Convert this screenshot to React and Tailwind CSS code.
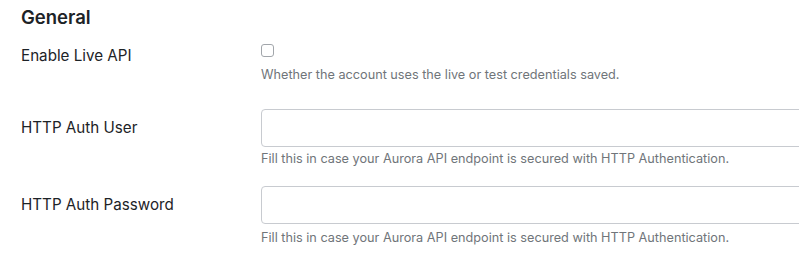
import React from 'react'

const font = { fontFamily: 'Inter, "Liberation Sans", sans-serif' }

function Row({ label, children, labelClass }) {
  return (
    <div className="grid grid-cols-[240px_1fr]">
      <div className={'text-[15.2px] leading-6 text-[#1d2327] ' + labelClass}>{label}</div>
      <div>{children}</div>
    </div>
  )
}

function Help({ children, className }) {
  return <p className={'text-[12.7px] leading-[18px] text-[#70757a] ' + className}>{children}</p>
}

export default function App() {
  return (
    <div className="min-h-screen bg-white pl-[21px] pt-[5px] overflow-hidden" style={font}>
      <h2 className="text-[18.5px] leading-6 font-semibold text-[#1d2327]">General</h2>

      <Row label="Enable Live API" labelClass="mt-[15px]">
        <div className="mt-[15px] w-[13px] h-[13px] rounded-[3px] border border-[#a2a6ab] bg-white" />
        <Help className="mt-[9px]">Whether the account uses the live or test credentials saved.</Help>
      </Row>

      <Row label="HTTP Auth User" labelClass="mt-[32px]">
        <div className="mt-[25px] w-[560px] h-[38px] rounded-[4px] border border-[#c8cbd0] bg-white" />
        <Help className="mt-[3px]">Fill this in case your Aurora API endpoint is secured with HTTP Authentication.</Help>
      </Row>

      <Row label="HTTP Auth Password" labelClass="mt-[25px]">
        <div className="mt-[18px] w-[560px] h-[38px] rounded-[4px] border border-[#c8cbd0] bg-white" />
        <Help className="mt-[5px]">Fill this in case your Aurora API endpoint is secured with HTTP Authentication.</Help>
      </Row>
    </div>
  )
}
